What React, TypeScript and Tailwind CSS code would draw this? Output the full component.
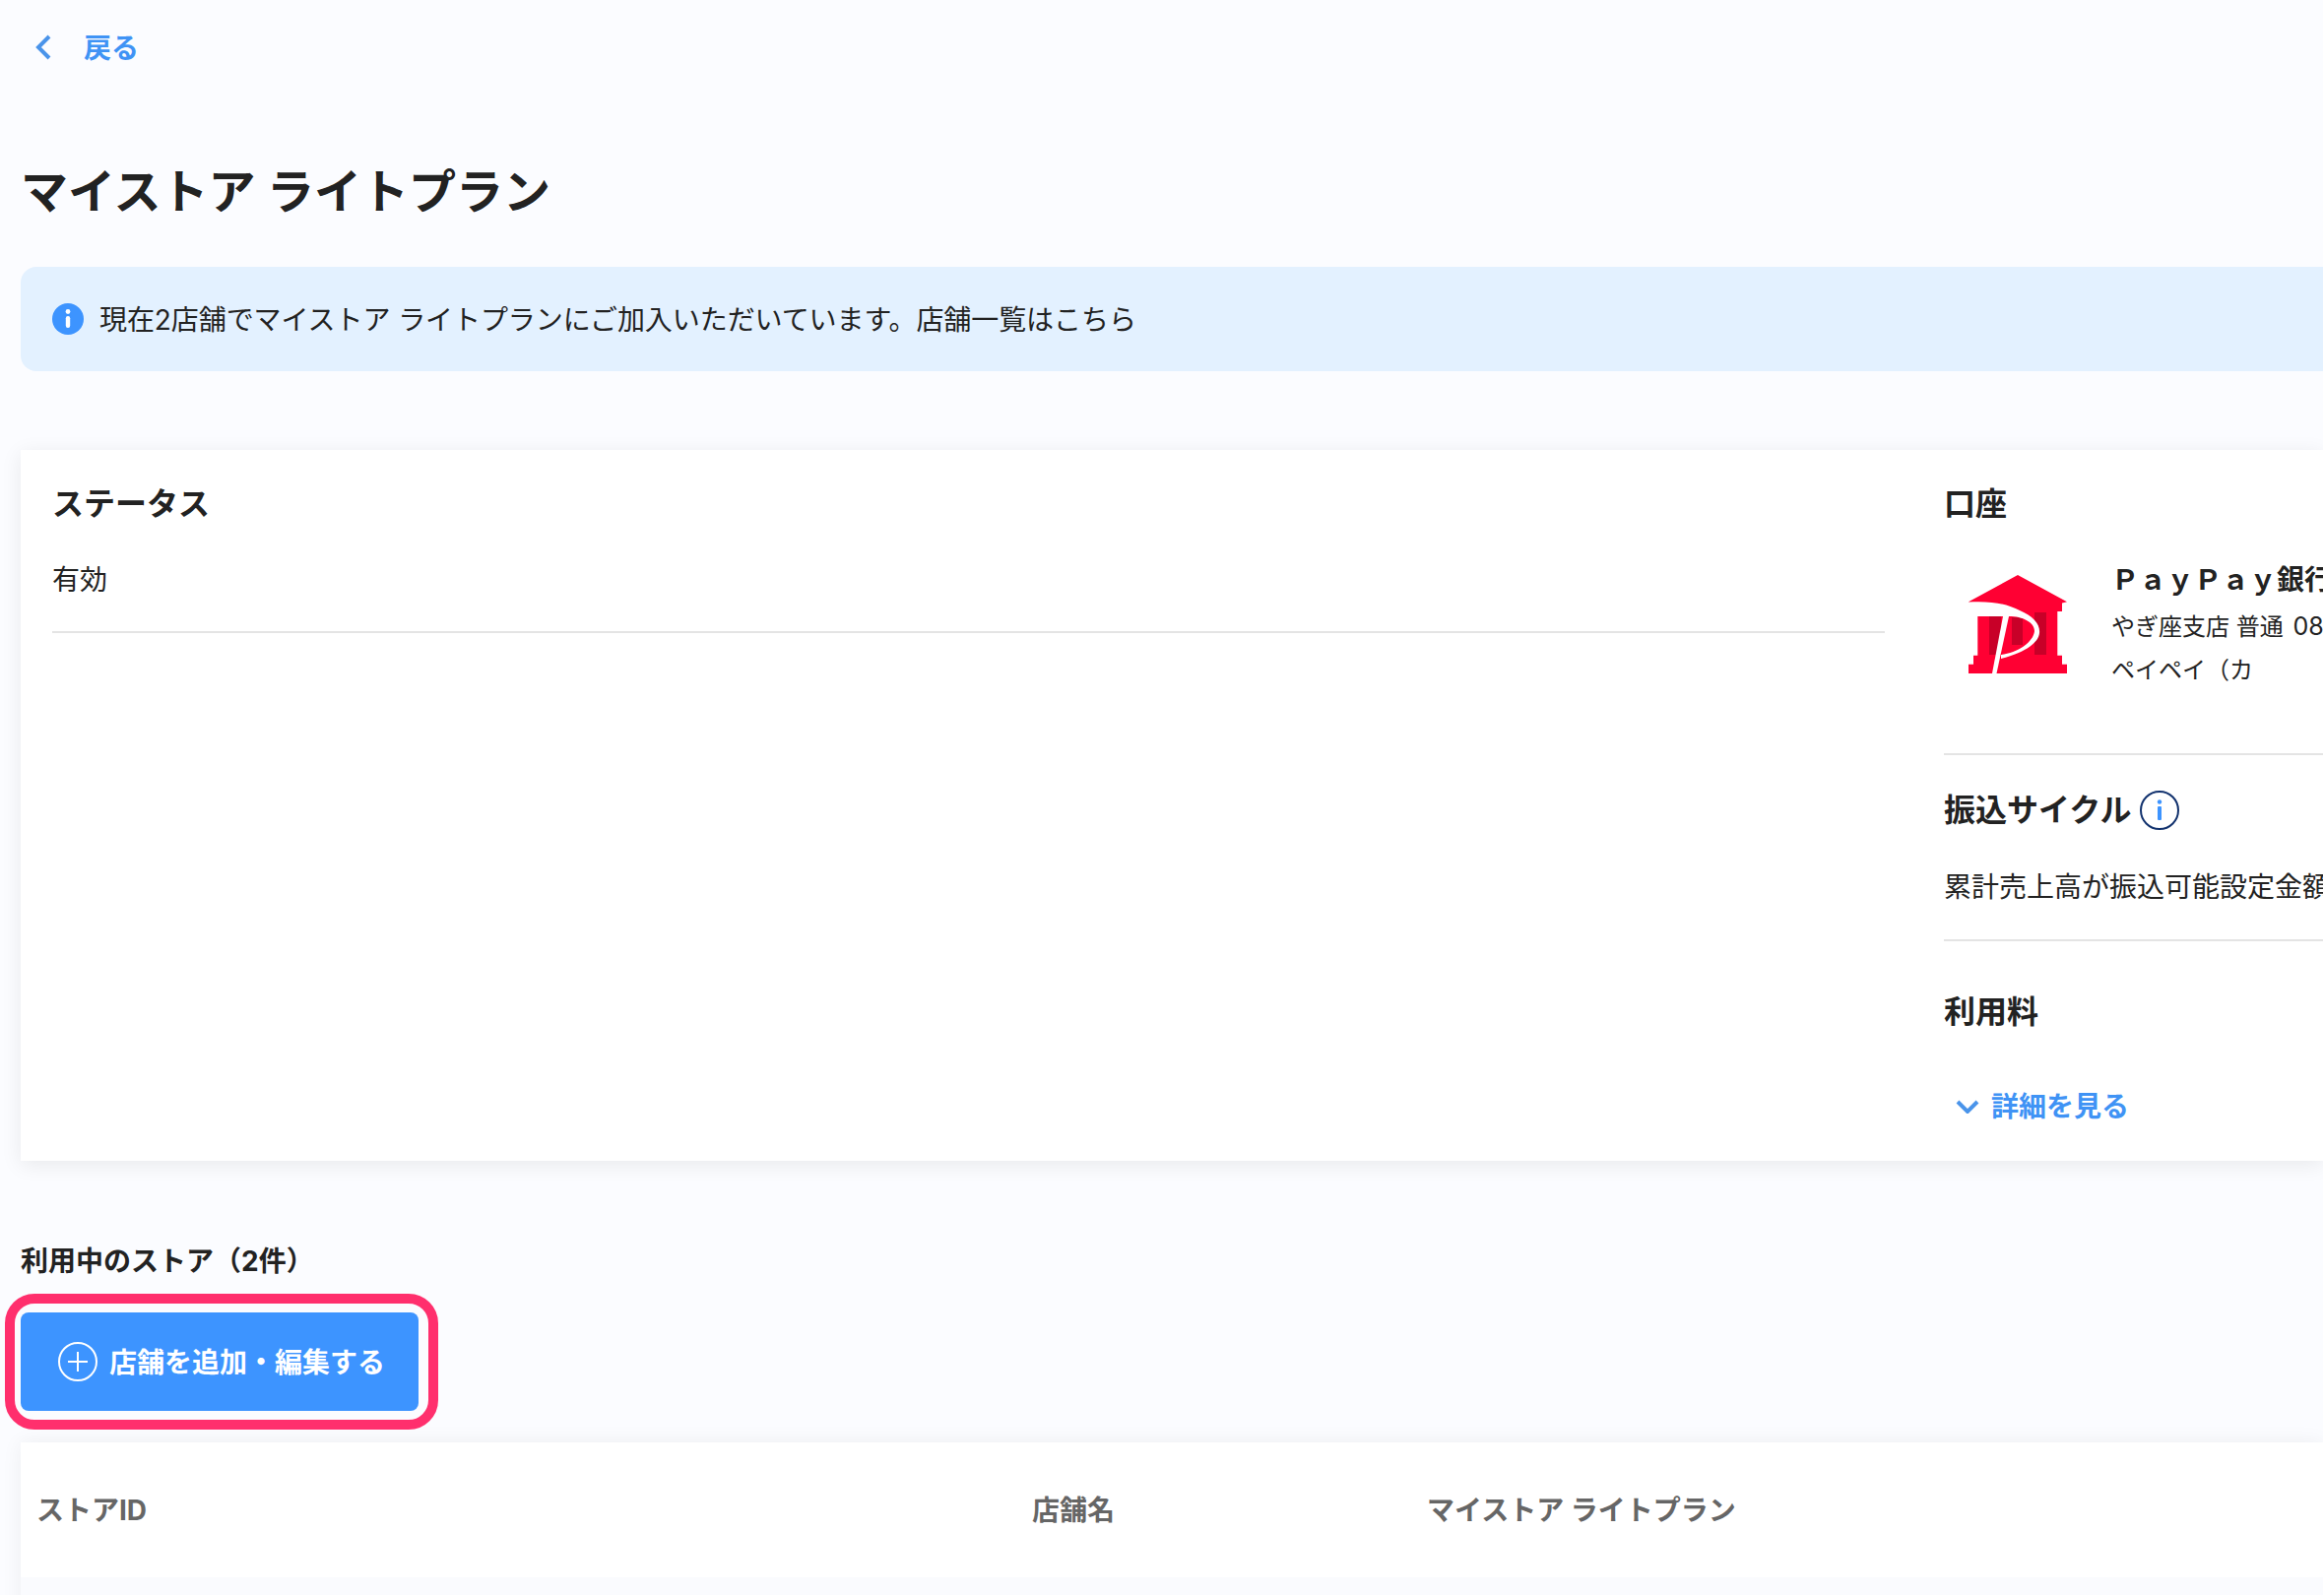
import React from "react";

function BankLogo() {
  return (
    <svg width="100" height="100" viewBox="0 0 100 100" className="block">
      <path fill="#ff0033" d="M50 0 L100 27.3 L95 28.5 L95 37 L90.3 37 L90.3 81.7 L95 81.7 L95 90.7 L100 90.7 L100 100 L0 100 L0 90.7 L5 90.7 L5 81.7 L9.3 81.7 L9.3 42 L0 27.3 Z" />
      <rect x="21" y="42" width="12" height="39" fill="#c80028" />
      <rect x="44" y="43" width="11" height="28" fill="#c80028" />
      <rect x="67" y="38" width="12" height="43" fill="#c80028" />
      <path fill="#ffffff" d="M0 27.5 C25 26 40 30 52 36 C66 42 73 50 72 59 C71 68 60 78 33 85 L33 81 C50 79 66 68 67 57 C67 48 55 42 41 42 L0 42 Z" />
      <path fill="#ffffff" d="M35 42 L41 42 L28.5 100 L24 100 Z" />
    </svg>
  );
}

export default function App() {
  return (
    <div className="w-[2359px] h-[1620px] overflow-hidden bg-[#fbfcff] text-[#222222] font-['Inter','Noto_Sans_CJK_JP',sans-serif]">
      <div className="pl-[21px] pt-[30px]">
        <div className="flex items-center h-[36px] pl-[14px] text-[#3f93f5] font-bold text-[28px] leading-[36px]">
          <svg width="18" height="26" viewBox="0 0 18 26" fill="none" stroke="#4a94ea" strokeWidth="4" className="block">
            <path d="M15 2 L4 13 L15 24" />
          </svg>
          <span className="ml-[32px] pt-[1px]">戻る</span>
        </div>

        <h1 className="mt-[99px] text-[48px] leading-[60px] font-bold">マイストア ライトプラン</h1>

        <div className="mt-[46px] h-[106px] flex items-center pl-[32px] bg-[#e3f1ff] rounded-l-[16px]">
          <svg width="32" height="32" viewBox="0 0 32 32" className="block shrink-0">
            <circle cx="16" cy="16" r="16" fill="#3d94ff" />
            <circle cx="16" cy="8.5" r="2.4" fill="#fff" />
            <rect x="13.8" y="13" width="4.4" height="12" rx="2.2" fill="#fff" />
          </svg>
          <span className="ml-[16px] pt-[2px] text-[28px] leading-[40px] tracking-[-0.08px]">現在2店舗でマイストア ライトプランにご加入いただいています。店舗一覧はこちら</span>
        </div>

        <div className="mt-[80px] h-[722px] flex bg-white shadow-[0_4px_20px_rgba(0,0,0,0.08)]">
          <div className="w-[1861px] ml-[32px] shrink-0">
            <div className="mt-[35px] text-[32px] leading-[40px] font-bold">ステータス</div>
            <div className="mt-[37px] text-[28px] leading-[40px] pb-[32px] border-b-2 border-[#e4e4e4]">有効</div>
          </div>
          <div className="ml-[60px] flex-1 min-w-0 overflow-hidden whitespace-nowrap">
            <div className="mt-[35px] text-[32px] leading-[40px] font-bold">口座</div>
            <div className="flex mt-[32px] h-[203px] border-b-2 border-[#e4e4e4]">
              <div className="ml-[25px] mt-[20px]"><BankLogo /></div>
              <div className="ml-[45px] mt-[3px]">
                <div className="text-[28px] leading-[44px] font-bold mb-[3px]">ＰａｙＰａｙ銀行</div>
                <div className="text-[24px] leading-[44px]">やぎ座支店 普通 <span className="text-[25px] ml-[3px]">08</span></div>
                <div className="text-[24px] leading-[44px]">ペイペイ（カ</div>
              </div>
            </div>
            <div className="mt-[36px] flex items-center h-[40px]">
              <span className="text-[32px] leading-[40px] font-bold">振込サイクル</span>
              <svg width="40" height="40" viewBox="0 0 40 40" className="block ml-[9px]">
                <circle cx="20" cy="20" r="19" fill="none" stroke="#12326e" strokeWidth="2" />
                <circle cx="20" cy="11.5" r="2.2" fill="#3d94ff" />
                <rect x="18" y="16" width="4" height="14" rx="1" fill="#3d94ff" />
              </svg>
            </div>
            <div className="mt-[38px] text-[28px] leading-[40px] pb-[33px] border-b-2 border-[#e4e4e4]">累計売上高が振込可能設定金額に達した時</div>
            <div className="mt-[52px] text-[32px] leading-[40px] font-bold">利用料</div>
            <div className="mt-[56px] flex items-center h-[40px] pl-[12px] text-[#3f93f5] text-[28px] font-bold">
              <svg width="24" height="14" viewBox="0 0 24 14" fill="none" stroke="#4a94ea" strokeWidth="4" className="block">
                <path d="M2 2 L12 12 L22 2" />
              </svg>
              <span className="ml-[12px]">詳細を見る</span>
            </div>
          </div>
        </div>

        <div className="mt-[82px] text-[28px] leading-[40px] font-bold">利用中のストア（2件）</div>

        <div className="relative mt-[32px] w-[404px]">
          <button className="w-[404px] h-[100px] flex items-center pl-[38px] bg-[#3d94ff] rounded-[8px] text-white text-[28px] font-bold">
            <svg width="40" height="40" viewBox="0 0 40 40" fill="none" stroke="#fff" className="block" strokeWidth="2">
              <circle cx="20" cy="20" r="19" />
              <path d="M20 10 V30 M10 20 H30" />
            </svg>
            <span className="ml-[12px] pt-[2px]">店舗を追加・編集する</span>
          </button>
          <div className="absolute left-[-16px] right-[-20px] top-[-19px] bottom-[-19px] rounded-[30px] border-[10px] border-[#ff2f6d]" />
        </div>

        <div className="mt-[32px] h-[300px] bg-[#fafbfe] shadow-[0_0_20px_rgba(0,0,0,0.06)]">
          <div className="h-[137px] bg-white grid grid-cols-[1011px_401px_1fr] items-center pl-[16px] text-[#666666] text-[28px] leading-[40px] font-bold">
            <div>ストアID</div>
            <div>店舗名</div>
            <div>マイストア ライトプラン</div>
          </div>
        </div>
      </div>
    </div>
  );
}
